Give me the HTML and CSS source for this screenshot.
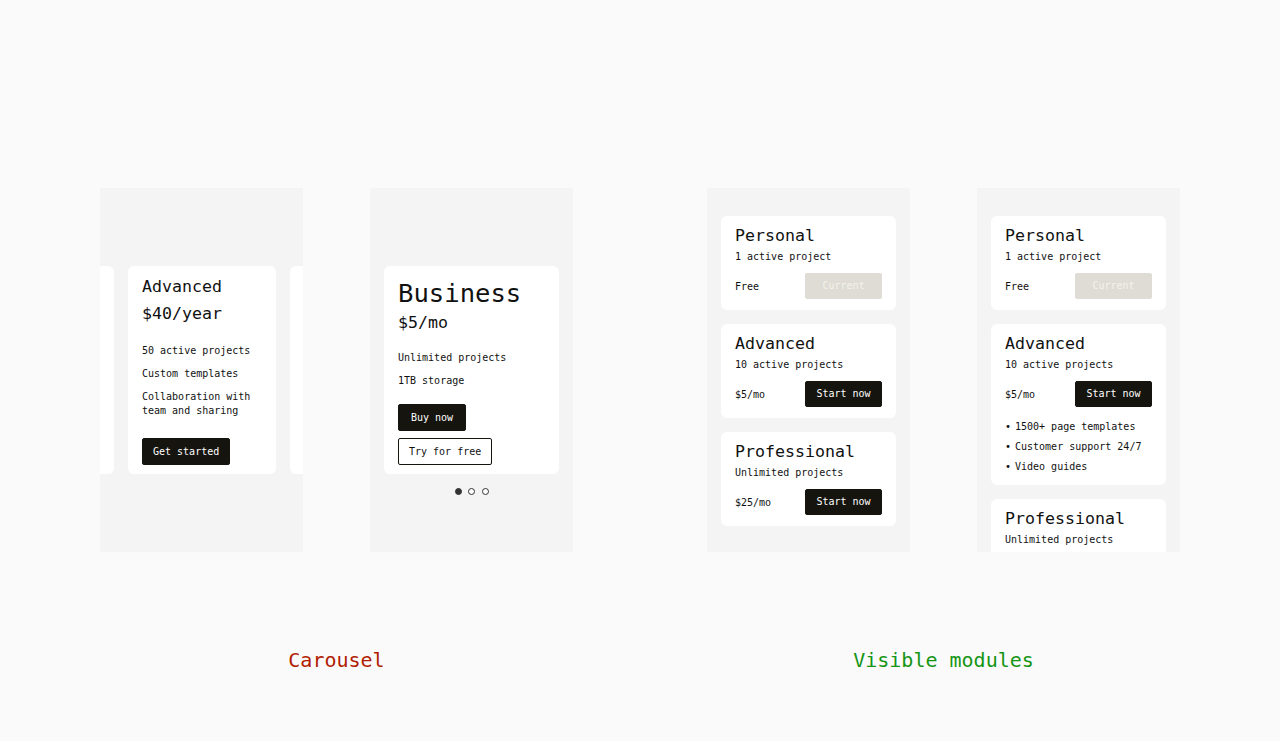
FILE: index.html
```html
<!DOCTYPE html>
<html lang="en">
<head>
<meta charset="utf-8">
<title>Pricing modules</title>
<link rel="stylesheet" href="styles.css">
</head>
<body>
<main class="page">
  <section class="group">
    <div class="panels">
      <div class="panel panel-carousel">
        <div class="track">
          <div class="card slide"></div>
          <div class="card slide">
            <h3 class="c-title">Advanced</h3>
            <p class="c-price">$40/year</p>
            <ul class="features">
              <li>50 active projects</li>
              <li>Custom templates</li>
              <li>Collaboration with team and sharing</li>
            </ul>
            <button class="btn btn-dark btn-get">Get started</button>
          </div>
          <div class="card slide"></div>
        </div>
      </div>
      <div class="panel panel-carousel panel-single">
        <div class="card biz">
          <h3 class="b-title">Business</h3>
          <p class="b-price">$5/mo</p>
          <ul class="features biz-features">
            <li>Unlimited projects</li>
            <li>1TB storage</li>
          </ul>
          <div class="btn-stack">
            <button class="btn btn-dark btn-buy">Buy now</button>
            <button class="btn btn-outline">Try for free</button>
          </div>
        </div>
        <div class="dots">
          <span class="dot active"></span>
          <span class="dot"></span>
          <span class="dot"></span>
        </div>
      </div>
    </div>
    <p class="label label-red">Carousel</p>
  </section>

  <section class="group">
    <div class="panels">
      <div class="panel panel-list">
        <div class="card module">
          <h3 class="m-title">Personal</h3>
          <p class="m-sub">1 active project</p>
          <div class="m-row"><span>Free</span><button class="btn btn-disabled btn-fixed">Current</button></div>
        </div>
        <div class="card module">
          <h3 class="m-title">Advanced</h3>
          <p class="m-sub">10 active projects</p>
          <div class="m-row"><span>$5/mo</span><button class="btn btn-dark btn-fixed">Start now</button></div>
        </div>
        <div class="card module">
          <h3 class="m-title">Professional</h3>
          <p class="m-sub">Unlimited projects</p>
          <div class="m-row"><span>$25/mo</span><button class="btn btn-dark btn-fixed">Start now</button></div>
        </div>
      </div>
      <div class="panel panel-list">
        <div class="card module">
          <h3 class="m-title">Personal</h3>
          <p class="m-sub">1 active project</p>
          <div class="m-row"><span>Free</span><button class="btn btn-disabled btn-fixed">Current</button></div>
        </div>
        <div class="card module">
          <h3 class="m-title">Advanced</h3>
          <p class="m-sub">10 active projects</p>
          <div class="m-row"><span>$5/mo</span><button class="btn btn-dark btn-fixed">Start now</button></div>
          <ul class="bullets">
            <li>1500+ page templates</li>
            <li>Customer support 24/7</li>
            <li>Video guides</li>
          </ul>
        </div>
        <div class="card module module-cut">
          <h3 class="m-title">Professional</h3>
          <p class="m-sub">Unlimited projects</p>
        </div>
      </div>
    </div>
    <p class="label label-green">Visible modules</p>
  </section>
</main>
</body>
</html>
```

FILE: styles.css
```css
* { box-sizing: border-box; }

html, body {
  margin: 0;
  padding: 0;
  background: #fafafa;
  font-family: "DejaVu Sans Mono", "Liberation Mono", monospace;
  color: #111;
}

h3, p, ul { margin: 0; padding: 0; font-weight: normal; }
ul { list-style: none; }

.page {
  display: flex;
  justify-content: center;
  gap: 134px;
  padding-top: 188px;
}

.group {
  display: flex;
  flex-direction: column;
  align-items: center;
}

.panels {
  display: flex;
  gap: 67px;
}

.panel {
  width: 203px;
  height: 364px;
  background: #f4f4f4;
  overflow: hidden;
}

.card {
  background: #fff;
  border-radius: 6px;
}

/* carousel */
.panel-carousel { padding-top: 78px; }

.track {
  display: flex;
  gap: 14px;
  margin-left: -134px;
}

.slide {
  flex: 0 0 148px;
  height: 208px;
  padding: 7px 14px 9px;
}

.c-title, .c-price {
  font-size: 16.6px;
  line-height: 27px;
}

.features {
  font-size: 10px;
  line-height: 14px;
  margin-top: 17px;
}
.features li + li { margin-top: 9px; }

.btn {
  display: inline-flex;
  align-items: center;
  justify-content: center;
  height: 27px;
  padding: 0 10px;
  border: 1px solid #15140e;
  border-radius: 2px;
  font-family: inherit;
  font-size: 10px;
  line-height: 1;
  cursor: pointer;
}

.btn-dark { background: #15140e; color: #fff; }
.btn-outline { background: #fff; color: #111; }
.btn-disabled { background: #dedcd4; border-color: #dedcd4; color: #f3f2ec; }

.btn-get { margin-top: 20px; }

.panel-single { padding-left: 14px; padding-right: 14px; }

.biz {
  height: 208px;
  padding: 12px 14px 9px;
}

.b-title { font-size: 25.6px; line-height: 31px; }
.b-price { font-size: 16.6px; line-height: 27px; }
.biz-features { margin-top: 15px; }

.btn-stack {
  display: flex;
  flex-direction: column;
  align-items: flex-start;
  gap: 7px;
  margin-top: 16px;
}
.btn-buy { padding: 0 12px; }

.dots {
  display: flex;
  justify-content: center;
  gap: 6.5px;
  margin-top: 14px;
}
.dot {
  width: 7px;
  height: 7px;
  border-radius: 50%;
  border: 1px solid #333;
  background: #fff;
}
.dot.active { background: #333; }

/* visible modules */
.panel-list {
  display: flex;
  flex-direction: column;
  gap: 14px;
  padding: 28px 14px 0;
}

.module {
  flex: none;
  padding: 10px 14px 11px;
}

.m-title { font-size: 16.6px; line-height: 20px; }
.m-sub { font-size: 10px; line-height: 14px; margin-top: 4px; }

.m-row {
  display: flex;
  justify-content: space-between;
  align-items: center;
  margin-top: 9px;
  font-size: 10px;
}

.btn-fixed { width: 77px; height: 26px; padding: 0; }

.bullets {
  font-size: 10px;
  line-height: 14px;
  margin-top: 13px;
}
.bullets li { display: flex; }
.bullets li + li { margin-top: 6px; }
.bullets li::before {
  content: "\2022";
  width: 10px;
  flex: none;
}

.module:has(.bullets) { padding-bottom: 11px; }
.module-cut { height: 94px; }

.label {
  margin-top: 96px;
  font-size: 20px;
  line-height: 24px;
}
.label-red { color: #b11d00; }
.label-green { color: #159515; }
```
